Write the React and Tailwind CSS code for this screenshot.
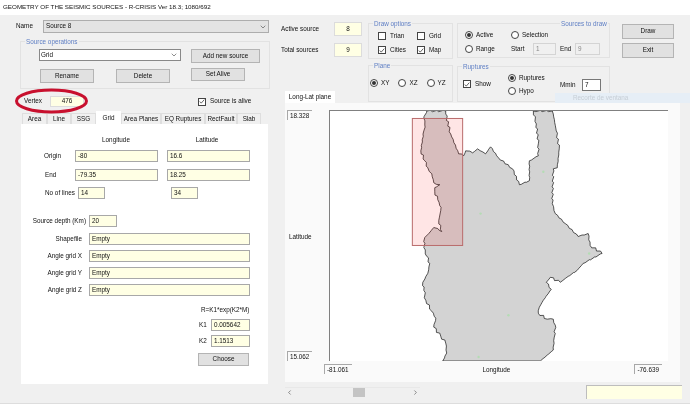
import React from 'react';
import { ChevronDown, ChevronLeft, ChevronRight } from 'lucide-react';

const coastline = [
    [426, 110], [423, 117], [424, 124], [423, 130], [420, 150], [424, 160], [427, 167], [431, 173], [433, 182], [439, 184],
    [434, 187], [434, 191], [437, 199], [439, 205], [440, 210], [438, 220], [441, 231], [437, 228], [433, 227], [428, 233],
    [424, 237], [423, 247], [426, 256], [429, 263], [427, 273], [422, 282], [423, 290], [425, 300], [431, 311], [435, 318],
    [433, 327], [440, 336], [445, 343], [446, 353], [442, 361], [540, 361], [553, 350], [554, 337], [555, 325], [553, 319],
    [547, 319], [538, 313], [539, 307], [543, 300], [551, 289], [546, 282], [550, 277], [560, 282], [568, 276], [577, 270],
    [583, 263], [602, 253], [590, 245], [588, 233], [578, 236], [565, 223], [555, 213], [552, 203], [553, 168], [557, 167],
    [559, 148], [556, 130], [553, 113], [552, 110], [533, 110], [536, 123], [538, 143], [538, 155], [529, 160], [529, 180],
    [519, 184], [512, 168], [498, 157], [490, 146], [485, 153], [477, 148], [472, 152], [465, 150], [463, 155], [458, 153],
    [450, 133], [445, 113], [445, 110],
];

// break the long segments up and nudge the points so the coast reads as a coast
const roughCoast = coastline.flatMap(([x, y], i) => {
    const [nx, ny] = coastline[(i + 1) % coastline.length];
    const steps = y === 361 && ny === 361 ? 1 : Math.max(1, Math.round(Math.hypot(nx - x, ny - y) / 3));
    const points = [];
    for (let s = 0; s < steps; s++) {
        const t = s / steps;
        const wobble = s === 0 ? 0 : Math.sin((x + s) * 12.9 + (y + s) * 78.2) * 0.8;
        points.push(`${(x + (nx - x) * t + wobble).toFixed(1)},${(y + (ny - y) * t - wobble).toFixed(1)}`);
    }
    return points;
});

const cities = [[543, 171], [480, 213], [589, 253], [508, 315], [478, 357]];

const tabs = [
    ['Area', 'w-[25px]'],
    ['Line', 'w-[24px]'],
    ['SSG', 'w-[25px]'],
    ['Grid', 'w-[25px]'],
    ['Area Planes', 'w-[40px]'],
    ['EQ Ruptures', 'w-[44px]'],
    ['RectFault', 'w-[32px]'],
    ['Slab', 'w-[24px]'],
];

const Button = ({ children, className = '' }) => (
    <div className={`flex items-center justify-center border border-[#b4b4b4] bg-[#e1e1e1] ${className}`}>{children}</div>
);

const Field = ({ children, className = '' }) => (
    <div className={`flex items-center border border-[#a8a8a8] bg-[#ffffe4] px-[2px] ${className}`}>{children}</div>
);

const Check = ({ label, checked, className = '' }) => (
    <div className={`flex items-center gap-[4px] ${className}`}>
        <div className="flex h-[8px] w-[8px] items-center justify-center border border-[#444] bg-white">
            {checked && (
                <svg viewBox="0 0 8 8" className="h-[7px] w-[7px]">
                    <path d="M1 4 L3 6.2 L7 1.5" fill="none" stroke="#333" strokeWidth="1" />
                </svg>
            )}
        </div>
        <span>{label}</span>
    </div>
);

const Radio = ({ label, checked, className = '' }) => (
    <div className={`flex items-center gap-[3px] ${className}`}>
        <div className="flex h-[8px] w-[8px] items-center justify-center rounded-full border border-[#444] bg-white">
            {checked && <div className="h-[4px] w-[4px] rounded-full bg-[#333]" />}
        </div>
        <span>{label}</span>
    </div>
);

const Group = ({ title, titleClass = 'left-[4px]', className = '', children }) => (
    <div className={`relative border border-[#e2e2e2] ${className}`}>
        <span className={`absolute -top-[3px] bg-[#f0f0f0] px-[1px] text-[#5f7fc4] ${titleClass}`}>{title}</span>
        {children}
    </div>
);

const ValueBox = ({ children, className = '' }) => (
    <div className={`w-fit border-l border-t border-[#a8a8a8] pl-[2px] pr-[3px] leading-[9px] ${className}`}>{children}</div>
);

const LabeledRow = ({ label, labelClass = 'w-[86px]', className = '', children }) => (
    <div className={`flex items-center ${className}`}>
        <span className={`text-right ${labelClass}`}>{label}</span>
        {children}
    </div>
);

const GridTab = () => (
    <div className="ml-[21px] flex h-[260px] w-[247px] flex-col bg-white pt-[11px]">
        <div className="flex h-[10px] items-center">
            <span className="ml-[81px] w-[28px] text-center">Longitude</span>
            <span className="ml-[65px] w-[24px] text-center">Latitude</span>
        </div>
        <div className="mt-[5px] flex h-[12px] items-center">
            <span className="ml-[23px] w-[31px]">Origin</span>
            <Field className="h-[12px] w-[83px]">-80</Field>
            <Field className="ml-[9px] h-[12px] w-[83px]">16.6</Field>
        </div>
        <div className="mt-[7px] flex h-[12px] items-center">
            <span className="ml-[24px] w-[30px]">End</span>
            <Field className="h-[12px] w-[83px]">-79.35</Field>
            <Field className="ml-[9px] h-[12px] w-[83px]">18.25</Field>
        </div>
        <div className="mt-[6px] flex h-[12px] items-center">
            <span className="ml-[24px] w-[33px]">No of lines</span>
            <Field className="h-[12px] w-[27px]">14</Field>
            <Field className="ml-[66px] h-[12px] w-[27px]">34</Field>
        </div>
        <LabeledRow label="Source depth (Km)" labelClass="w-[66px] pr-[1px]" className="mt-[16px] h-[12px]">
            <Field className="ml-[2px] h-[12px] w-[28px]">20</Field>
        </LabeledRow>
        <LabeledRow label="Shapefile" labelClass="w-[61px]" className="mt-[6px] h-[12px]">
            <Field className="ml-[7px] h-[12px] w-[161px]">Empty</Field>
        </LabeledRow>
        <LabeledRow label="Angle grid X" labelClass="w-[61px]" className="mt-[5px] h-[12px]">
            <Field className="ml-[7px] h-[12px] w-[161px]">Empty</Field>
        </LabeledRow>
        <LabeledRow label="Angle grid Y" labelClass="w-[61px]" className="mt-[5px] h-[12px]">
            <Field className="ml-[7px] h-[12px] w-[161px]">Empty</Field>
        </LabeledRow>
        <LabeledRow label="Angle grid Z" labelClass="w-[61px]" className="mt-[5px] h-[12px]">
            <Field className="ml-[7px] h-[12px] w-[161px]">Empty</Field>
        </LabeledRow>
        <div className="mt-[9px] ml-[180px] h-[10px] leading-[10px]">R=K1*exp(K2*M)</div>
        <div className="mt-[4px] ml-[178px] flex h-[12px] items-center">
            <span className="w-[12px]">K1</span>
            <Field className="h-[12px] w-[39px]">0.005642</Field>
        </div>
        <div className="mt-[4px] ml-[178px] flex h-[12px] items-center">
            <span className="w-[12px]">K2</span>
            <Field className="h-[12px] w-[39px]">1.1513</Field>
        </div>
        <Button className="mt-[6px] ml-[177px] h-[13px] w-[51px]">Choose</Button>
    </div>
);

const LeftColumn = () => (
    <div className="w-[281px] shrink-0">
        <div className="mt-[5px] flex h-[13px] items-center pl-[16px]">
            <span className="w-[27px]">Name</span>
            <div className="flex h-[13px] w-[226px] items-center justify-between border border-[#adadad] bg-[#e3e3e3] pl-[2px] pr-[1px]">
                <span>Source 8</span>
                <ChevronDown size={8} color="#555" />
            </div>
        </div>

        <Group title="Source operations" className="mt-[8px] ml-[20px] h-[48px] w-[250px]">
            <div className="flex pl-[18px] pt-[7px]">
                <div className="flex h-[12px] w-[142px] items-center justify-between border border-[#888] bg-white pl-[1px] pr-[2px]">
                    <span>Grid</span>
                    <ChevronDown size={8} color="#555" />
                </div>
                <Button className="ml-[10px] h-[14px] w-[69px]">Add new source</Button>
            </div>
            <div className="mt-[5px] flex items-start pl-[19px]">
                <Button className="mt-[1px] h-[14px] w-[54px]">Rename</Button>
                <Button className="ml-[22px] mt-[1px] h-[14px] w-[54px]">Delete</Button>
                <Button className="ml-[21px] h-[13px] w-[54px]">Set Alive</Button>
            </div>
        </Group>

        <div className="mt-[7px] flex h-[11px] items-center pl-[24px]">
            <span className="w-[26px]">Vertex</span>
            <Field className="h-[11px] w-[34px] justify-center border-[#dcdcdc]">476</Field>
            <Check label="Source is alive" checked className="ml-[114px]" />
        </div>

        <div className="ml-[22px] mt-[6px] flex h-[11px] items-end">
            {tabs.map(([name, width]) => (
                <div
                    key={name}
                    className={`flex items-center justify-center border border-b-0 ${width} ${
                        name === 'Grid' ? 'h-[13px] border-white bg-white' : 'h-[11px] border-[#dedede]'
                    }`}
                >
                    {name}
                </div>
            ))}
        </div>
        <GridTab />
    </div>
);

const CoastMap = () => (
    <svg viewBox="329 110 339 251" className="block h-full w-full">
        <polygon points={roughCoast.join(' ')} fill="#d3d3d3" stroke="#111" strokeWidth="0.7" />
        {cities.map(([x, y]) => (
            <circle key={`${x}-${y}`} cx={x} cy={y} r="1.2" fill="#b4dcb4" />
        ))}
        <rect x="411.5" y="117.5" width="50.5" height="127.5" fill="#ff0000" fillOpacity="0.1" stroke="#b96b6b" strokeWidth="1" />
    </svg>
);

const PlotPanel = () => (
    <div className="ml-[4px] flex h-[279px] w-[395px] flex-col bg-[#fafafa] pt-[7px]">
        <div className="flex h-[251px]">
            <div className="flex w-[44px] shrink-0 flex-col justify-between pl-[2px]">
                <ValueBox>18.328</ValueBox>
                <span className="mt-[4px] pl-[2px]">Latitude</span>
                <ValueBox>15.062</ValueBox>
            </div>
            <div className="h-[251px] w-[339px] border-l border-t border-[#808080] bg-white">
                <CoastMap />
            </div>
        </div>
        <div className="mt-[3px] flex items-center pl-[39px] pr-[18px]">
            <ValueBox className="w-[28px]">-81.061</ValueBox>
            <span className="ml-[131px] leading-[9px]">Longitude</span>
            <ValueBox className="ml-auto w-[28px]">-76.639</ValueBox>
        </div>
    </div>
);

const RightColumn = () => (
    <div className="min-w-0 flex-1">
        <div className="flex h-[88px]">
            <div className="flex w-[81px] shrink-0 flex-col">
                <div className="mt-[7px] flex h-[14px] items-center">
                    <span className="w-[53px]">Active source</span>
                    <Field className="h-[14px] w-[28px] justify-center border-[#dcdcdc]">8</Field>
                </div>
                <div className="mt-[7px] flex h-[14px] items-center">
                    <span className="w-[53px]">Total sources</span>
                    <Field className="h-[14px] w-[28px] justify-center border-[#dcdcdc]">9</Field>
                </div>
                <div className="ml-[4px] mt-auto flex h-[12px] w-[50px] items-center justify-center bg-white">Long-Lat plane</div>
            </div>

            <div className="ml-[6px] w-[85px] shrink-0">
                <Group title="Draw options" className="mt-[8px] h-[36px]">
                    <div className="grid grid-cols-[39px_1fr] gap-y-[6px] pl-[9px] pt-[8px]">
                        <Check label="Trian" />
                        <Check label="Grid" />
                        <Check label="Cities" checked />
                        <Check label="Map" checked />
                    </div>
                </Group>
                <Group title="Plane" className="mt-[6px] h-[37px]">
                    <div className="flex gap-[9px] pl-[1px] pt-[13px]">
                        <Radio label="XY" checked />
                        <Radio label="XZ" />
                        <Radio label="YZ" />
                    </div>
                </Group>
            </div>

            <div className="ml-[4px] w-[153px] shrink-0">
                <Group title="Sources to draw" titleClass="left-[102px]" className="mt-[8px] h-[35px]">
                    <div className="flex items-center pl-[7px] pt-[7px]">
                        <Radio label="Active" checked className="w-[46px]" />
                        <Radio label="Selection" />
                    </div>
                    <div className="mt-[4px] flex h-[12px] items-center pl-[7px]">
                        <Radio label="Range" className="w-[46px]" />
                        <span className="w-[22px]">Start</span>
                        <div className="flex h-[12px] w-[23px] items-center border border-[#d4d4d4] px-[2px] text-[#888]">1</div>
                        <span className="ml-[4px] w-[15px]">End</span>
                        <div className="flex h-[12px] w-[25px] items-center border border-[#d4d4d4] px-[2px] text-[#888]">9</div>
                    </div>
                </Group>
                <Group title="Ruptures" className="mt-[8px] h-[36px]">
                    <div className="flex pl-[5px] pt-[7px]">
                        <Check label="Show" checked className="mt-[5px] h-[10px] w-[45px]" />
                        <div className="flex w-[52px] flex-col gap-[5px]">
                            <Radio label="Ruptures" checked />
                            <Radio label="Hypo" />
                        </div>
                        <div className="mt-[5px] flex h-[12px] items-center">
                            <span className="w-[22px]">Mmin</span>
                            <div className="flex h-[12px] w-[19px] items-center border border-[#777] bg-white px-[2px]">7</div>
                        </div>
                    </div>
                </Group>
            </div>

            <div className="ml-[12px] w-[52px] shrink-0 pt-[9px]">
                <Button className="h-[15px]">Draw</Button>
                <Button className="mt-[4px] h-[15px]">Exit</Button>
            </div>
        </div>

        <PlotPanel />

        <div className="mt-[3px] flex h-[14px] items-center pl-[4px]">
            <div className="relative flex h-[10px] w-[135px] items-center justify-between border-t border-[#e8e8e8] px-[1px]">
                <ChevronLeft size={7} color="#444" />
                <div className="absolute left-[68px] top-0 h-[9px] w-[12px] bg-[#c4c4c4]" />
                <ChevronRight size={7} color="#444" />
            </div>
            <div className="ml-[166px] h-[14px] w-[96px] border-l border-t border-[#bdbdbd] bg-[#ffffe4]" />
        </div>
    </div>
);

const App = () => (
    <div className="relative h-[404px] w-[690px] overflow-hidden border-b border-[#dddddd] bg-[#f0f0f0] font-['Liberation_Sans',Arial,sans-serif] text-[6.35px] leading-none text-[#111] blur-[0.3px]">
        <div className="flex h-[15px] items-center bg-white pl-[3px] text-[6.25px]">GEOMETRY OF THE SEISMIC SOURCES - R-CRISIS Ver 18.3; 1080/692</div>
        <div className="flex">
            <LeftColumn />
            <RightColumn />
        </div>

        {/* annotation drawn over the screenshot */}
        <svg className="absolute left-[14px] top-[87px]" width="76" height="29" viewBox="0 0 76 29">
            <ellipse cx="37.5" cy="14" rx="35" ry="11" fill="none" stroke="#c8102e" strokeWidth="3" />
        </svg>

        {/* faded tooltip caught in the capture */}
        <div className="absolute left-[555px] top-[93px] flex h-[10px] w-[135px] items-center bg-[#e6eef6] pl-[18px] text-[#c6ced6]">Recorte de ventana</div>
    </div>
);

export default App;
